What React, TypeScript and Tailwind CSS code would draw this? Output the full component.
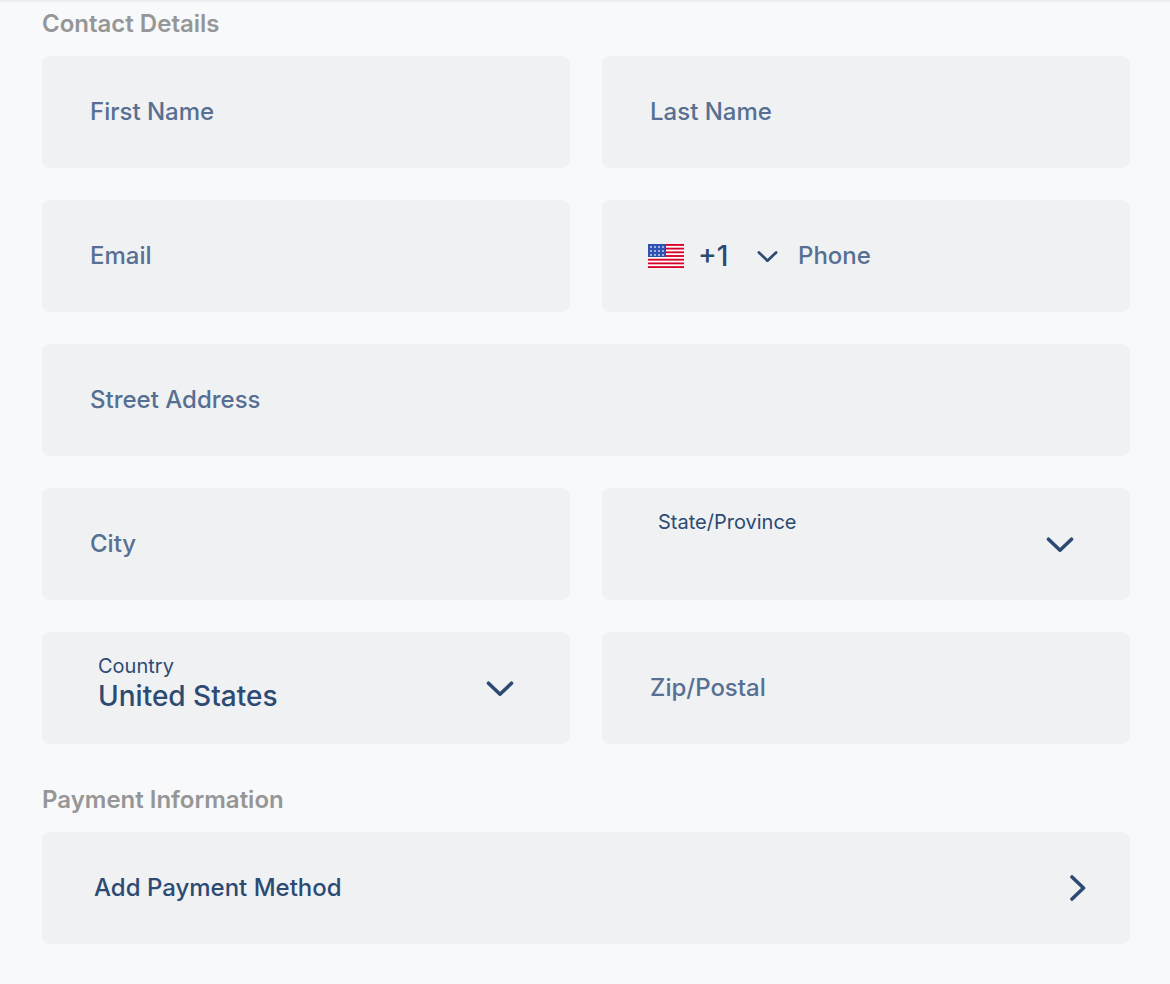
import type { ReactNode } from 'react';

export default function App() {
  return (
    <main className="min-h-screen border-t-2 border-[#ededef] bg-[#f8f9fb] pt-1.5 pr-10 pb-10 pl-[42px] font-['Inter',sans-serif] text-[#2c4a72] antialiased">
      <form>
        <SectionTitle>Contact Details</SectionTitle>
        <div className="mt-4 grid grid-cols-2 gap-8">
          <TextField id="first-name" label="First Name" />
          <TextField id="last-name" label="Last Name" />
          <TextField id="email" label="Email" type="email" />
          <PhoneField />
          <div className="col-span-2">
            <TextField id="street" label="Street Address" />
          </div>
          <TextField id="city" label="City" />
          <SelectField id="state" label="State/Province" options={['']} />
          <SelectField id="country" label="Country" options={['United States']} />
          <TextField id="zip" label="Zip/Postal" />
        </div>

        <div className="mt-10">
          <SectionTitle>Payment Information</SectionTitle>
        </div>
        <button
          type="button"
          className="mt-4 flex h-28 w-full items-center justify-between rounded-lg bg-[#eff1f3] pr-11 pl-13 text-2xl font-medium">
          Add Payment Method
          <svg className="h-7 w-4" viewBox="0 0 16 28" fill="none" aria-hidden="true">
            <path
              d="M2 3l11.5 11L2 25"
              stroke="currentColor"
              strokeWidth="3.6"
              strokeLinecap="round"
              strokeLinejoin="round"
            />
          </svg>
        </button>
      </form>
    </main>
  );
}

function SectionTitle({ children }: { children: ReactNode }) {
  return <h2 className="text-2xl font-semibold text-[#969696]">{children}</h2>;
}

function TextField({ id, label, type = 'text' }: TextFieldProps) {
  return (
    <input
      id={id}
      type={type}
      aria-label={label}
      placeholder={label}
      className="block h-28 w-full rounded-lg bg-[#eff1f3] px-12 pb-0.5 text-2xl font-medium outline-none placeholder:text-[#566f92]"
    />
  );
}

function SelectField({ id, label, options }: SelectFieldProps) {
  return (
    <div className="relative">
      <label htmlFor={id} className="absolute top-5 left-14 text-xl">
        {label}
      </label>
      <select
        id={id}
        className="block h-28 w-full appearance-none rounded-lg bg-[#eff1f3] pt-4 pr-24 pl-14 text-[28px] font-medium outline-none">
        {options.map((option) => (
          <option key={option}>{option}</option>
        ))}
      </select>
      <ChevronDown className="pointer-events-none absolute top-12 right-14 h-4 w-7" />
    </div>
  );
}

function PhoneField() {
  return (
    <div className="flex h-28 items-center rounded-lg bg-[#eff1f3] pr-12 pl-[46px]">
      <UsFlag />
      <div className="relative ml-3.5 w-20 shrink-0">
        <select
          aria-label="Country code"
          className="block w-full appearance-none text-[28px] font-medium outline-none">
          <option>+1</option>
        </select>
        <ChevronDown className="pointer-events-none absolute top-1/2 right-0 h-3 w-[21px] -translate-y-1/2" />
      </div>
      <input
        type="tel"
        aria-label="Phone"
        placeholder="Phone"
        className="ml-5 w-full min-w-0 text-2xl font-medium outline-none placeholder:text-[#566f92]"
      />
    </div>
  );
}

function ChevronDown({ className }: { className: string }) {
  return (
    <svg className={className} viewBox="0 0 28 16" fill="none" aria-hidden="true">
      <path
        d="M2.5 3.2L14 14.2L25.5 3.2"
        stroke="currentColor"
        strokeWidth="3.6"
        strokeLinecap="round"
        strokeLinejoin="round"
      />
    </svg>
  );
}

const stripes = [0, 1, 2, 3, 4, 5, 6];
const starRows = [2, 6, 10];
const starColumns = [2, 6, 10, 14];

function UsFlag() {
  return (
    <svg className="h-6 w-9 shrink-0" viewBox="0 0 36 24" aria-hidden="true">
      <rect width="36" height="24" fill="#fff" />
      {stripes.map((i) => (
        <rect key={i} y={(i * 48) / 13} width="36" height={24 / 13} fill="#d80027" />
      ))}
      <rect width="18" height="13" fill="#2e52b2" />
      {starRows.map((y) =>
        starColumns.map((x) => (
          <rect key={`${x}-${y}`} x={x} y={y} width="2" height="2" fill="#a3b2dc" />
        ))
      )}
    </svg>
  );
}

interface TextFieldProps {
  id: string;
  label: string;
  type?: string;
}

interface SelectFieldProps {
  id: string;
  label: string;
  options: string[];
}
